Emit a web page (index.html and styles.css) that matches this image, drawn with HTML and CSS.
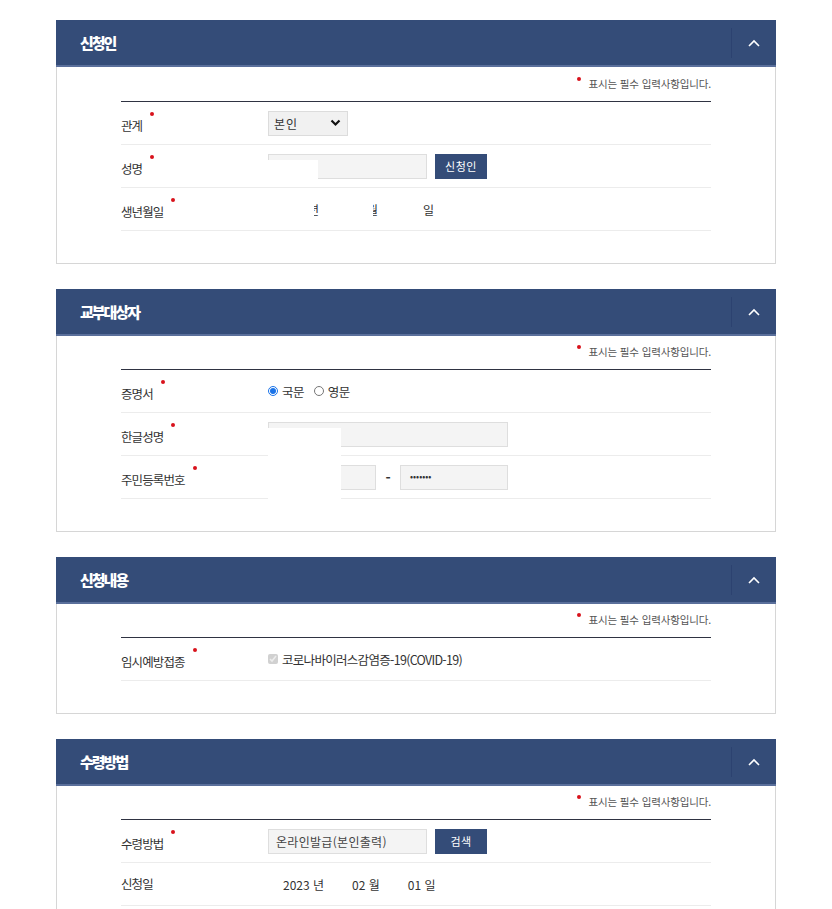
FILE: index.html
```html
<!DOCTYPE html>
<html lang="ko">
<head>
<meta charset="utf-8">
<link rel="stylesheet" href="styles.css">
</head>
<body>
<div class="page">

  <section class="panel">
    <div class="panel-head">
      <h2 class="panel-title">신청인</h2>
      <button class="toggle" type="button"><svg width="12" height="8" viewBox="0 0 12 8"><path d="M1 7 L6 2 L11 7" fill="none" stroke="#fff" stroke-width="1.6"/></svg></button>
    </div>
    <div class="panel-body first">
      <p class="note"><i class="note-dot"></i>표시는 필수 입력사항입니다.</p>
      <div class="rows">
        <div class="row">
          <div class="label">관계<i class="req"></i></div>
          <div class="value">
            <div class="select"><span>본인</span><svg width="11" height="8" viewBox="0 0 11 8"><path d="M1.5 1.5 L5.5 5.5 L9.5 1.5" fill="none" stroke="#111" stroke-width="2.2"/></svg></div>
          </div>
        </div>
        <div class="row">
          <div class="label">성명<i class="req"></i></div>
          <div class="value">
            <div class="field w159"><span class="mask mask-name"></span></div>
            <button class="btn" type="button">신청인</button>
          </div>
        </div>
        <div class="row">
          <div class="label">생년월일<i class="req"></i></div>
          <div class="value birth">
            <span class="clip c1"><span>년</span></span>
            <span class="clip c2"><span>월</span></span>
            <span class="day">일</span>
          </div>
        </div>
      </div>
    </div>
  </section>

  <section class="panel">
    <div class="panel-head">
      <h2 class="panel-title">교부대상자</h2>
      <button class="toggle" type="button"><svg width="12" height="8" viewBox="0 0 12 8"><path d="M1 7 L6 2 L11 7" fill="none" stroke="#fff" stroke-width="1.6"/></svg></button>
    </div>
    <div class="panel-body">
      <p class="note"><i class="note-dot"></i>표시는 필수 입력사항입니다.</p>
      <div class="rows">
        <div class="row">
          <div class="label">증명서<i class="req"></i></div>
          <div class="value radios">
            <label class="opt"><input type="radio" name="cert" checked>국문</label>
            <label class="opt"><input type="radio" name="cert">영문</label>
          </div>
        </div>
        <div class="row">
          <div class="label">한글성명<i class="req"></i></div>
          <div class="value holder">
            <div class="field w240"></div>
            <span class="mask mask-big"></span>
          </div>
        </div>
        <div class="row">
          <div class="label">주민등록번호<i class="req"></i></div>
          <div class="value">
            <div class="field w108"></div>
            <span class="dash">-</span>
            <div class="field w108 pw">•••••••</div>
          </div>
        </div>
      </div>
    </div>
  </section>

  <section class="panel">
    <div class="panel-head">
      <h2 class="panel-title">신청내용</h2>
      <button class="toggle" type="button"><svg width="12" height="8" viewBox="0 0 12 8"><path d="M1 7 L6 2 L11 7" fill="none" stroke="#fff" stroke-width="1.6"/></svg></button>
    </div>
    <div class="panel-body">
      <p class="note"><i class="note-dot"></i>표시는 필수 입력사항입니다.</p>
      <div class="rows">
        <div class="row">
          <div class="label">임시예방접종<i class="req"></i></div>
          <div class="value">
            <label class="opt check"><input type="checkbox" checked disabled>코로나바이러스감염증-19(COVID-19)</label>
          </div>
        </div>
      </div>
    </div>
  </section>

  <section class="panel">
    <div class="panel-head">
      <h2 class="panel-title">수령방법</h2>
      <button class="toggle" type="button"><svg width="12" height="8" viewBox="0 0 12 8"><path d="M1 7 L6 2 L11 7" fill="none" stroke="#fff" stroke-width="1.6"/></svg></button>
    </div>
    <div class="panel-body">
      <p class="note"><i class="note-dot"></i>표시는 필수 입력사항입니다.</p>
      <div class="rows">
        <div class="row">
          <div class="label">수령방법<i class="req"></i></div>
          <div class="value">
            <div class="field w159 txt">온라인발급(본인출력)</div>
            <button class="btn" type="button">검색</button>
          </div>
        </div>
        <div class="row">
          <div class="label">신청일</div>
          <div class="value date">
            <span>2023 년</span>
            <span>02 월</span>
            <span>01 일</span>
          </div>
        </div>
      </div>
    </div>
  </section>

</div>
</body>
</html>
```

FILE: styles.css
```css
* { box-sizing: border-box; }
html, body { margin: 0; padding: 0; background: #fff; }
body {
  font-family: "Noto Sans CJK KR", "Noto Sans", sans-serif;
  color: #333;
}
.page {
  width: 720px;
  margin-left: 56px;
  padding-top: 20px;
}
.panel { margin-bottom: 25px; }
.panel-head {
  display: flex;
  align-items: center;
  justify-content: space-between;
  height: 47px;
  background: #344c78;
  border-bottom: 2px solid #5a6f9b;
}
.panel-title {
  margin: 0 0 0 24px;
  font-size: 15px;
  font-weight: 900;
  letter-spacing: -2px;
  color: #fff;
  line-height: 20px;
}
.toggle {
  display: flex;
  align-items: center;
  justify-content: center;
  width: 45px;
  height: 30px;
  padding: 0;
  margin: 0;
  border: 0;
  border-left: 1px solid #2c4270;
  background: transparent;
}
.panel-body {
  border: 1px solid #d6d6d6;
  border-top: 0;
  padding: 7px 64px 32px 64px;
}
.panel-body.first { padding-top: 8px; padding-bottom: 32px; }
.note {
  margin: 0 0 8px 0;
  text-align: right;
  font-size: 10.5px;
  letter-spacing: -0.15px;
  line-height: 18px;
  color: #555;
}
.note-dot {
  display: inline-block;
  width: 4px;
  height: 4px;
  border-radius: 50%;
  background: #d8121c;
  margin-right: 8px;
  vertical-align: 7px;
}
.rows { border-top: 1px solid #2f3342; }
.row {
  display: flex;
  align-items: center;
  height: 43px;
  border-bottom: 1px solid #ececec;
}
.label {
  width: 147px;
  flex: none;
  font-size: 12.5px;
  letter-spacing: -0.9px;
  color: #333;
  line-height: 18px;
}
.req {
  display: inline-block;
  width: 4px;
  height: 4px;
  border-radius: 50%;
  background: #d8121c;
  margin-left: 8px;
  vertical-align: 15px;
}
.value {
  display: flex;
  align-items: center;
  font-size: 12px;
  color: #333;
}
.select {
  display: flex;
  align-items: center;
  justify-content: space-between;
  width: 80px;
  height: 25px;
  padding: 0 6px 0 5px;
  background: #f1f1f1;
  border: 1px solid #dcdcdc;
  font-size: 12px;
  letter-spacing: 1px;
  color: #333;
}
.field {
  position: relative;
  height: 25px;
  background: #f4f4f4;
  border: 1px solid #dedede;
}
.w159 { width: 159px; }
.w240 { width: 240px; }
.w108 { width: 108px; }
.mask {
  position: absolute;
  z-index: 2;
  background: #fff;
}
.mask-name { left: -1px; top: 5px; width: 50px; height: 21px; }
.holder { position: relative; }
.mask-big { left: 0; top: 6px; width: 73px; height: 71px; }
.btn {
  width: 52px;
  height: 25px;
  margin: 0 0 0 8px;
  padding: 0;
  border: 0;
  background: #344c78;
  color: #fff;
  font-family: "Noto Sans CJK KR", sans-serif;
  font-size: 11px;
  letter-spacing: 0.5px;
}
.birth { font-size: 12px; }
.clip {
  display: inline-block;
  overflow: hidden;
  width: 6px;
}
.clip span { display: inline-block; margin-left: -6px; }
.c1 { margin-left: 46px; }
.c2 { margin-left: 53px; }
.day { margin-left: 44px; }
.radios { gap: 10px; }
.opt {
  display: flex;
  align-items: center;
  font-size: 12.5px;
  letter-spacing: -0.6px;
  color: #333;
}
.opt input {
  width: 10px;
  height: 10px;
  margin: 0 4px 0 0;
  accent-color: #1a73e8;
}
.check { font-size: 12.5px; letter-spacing: -0.7px; color: #333; }
.dash {
  width: 24px;
  text-align: center;
  font-weight: 700;
  font-size: 14px;
  color: #333;
}
.pw {
  padding-left: 9px;
  line-height: 22px;
  font-size: 9px;
  letter-spacing: 0px;
  color: #333;
}
.txt {
  padding-left: 7px;
  line-height: 23px;
  font-size: 12px;
  letter-spacing: 0.3px;
  color: #444;
}
.date span { margin-right: 28px; }
.date span:first-child { margin-left: 15px; }
```
